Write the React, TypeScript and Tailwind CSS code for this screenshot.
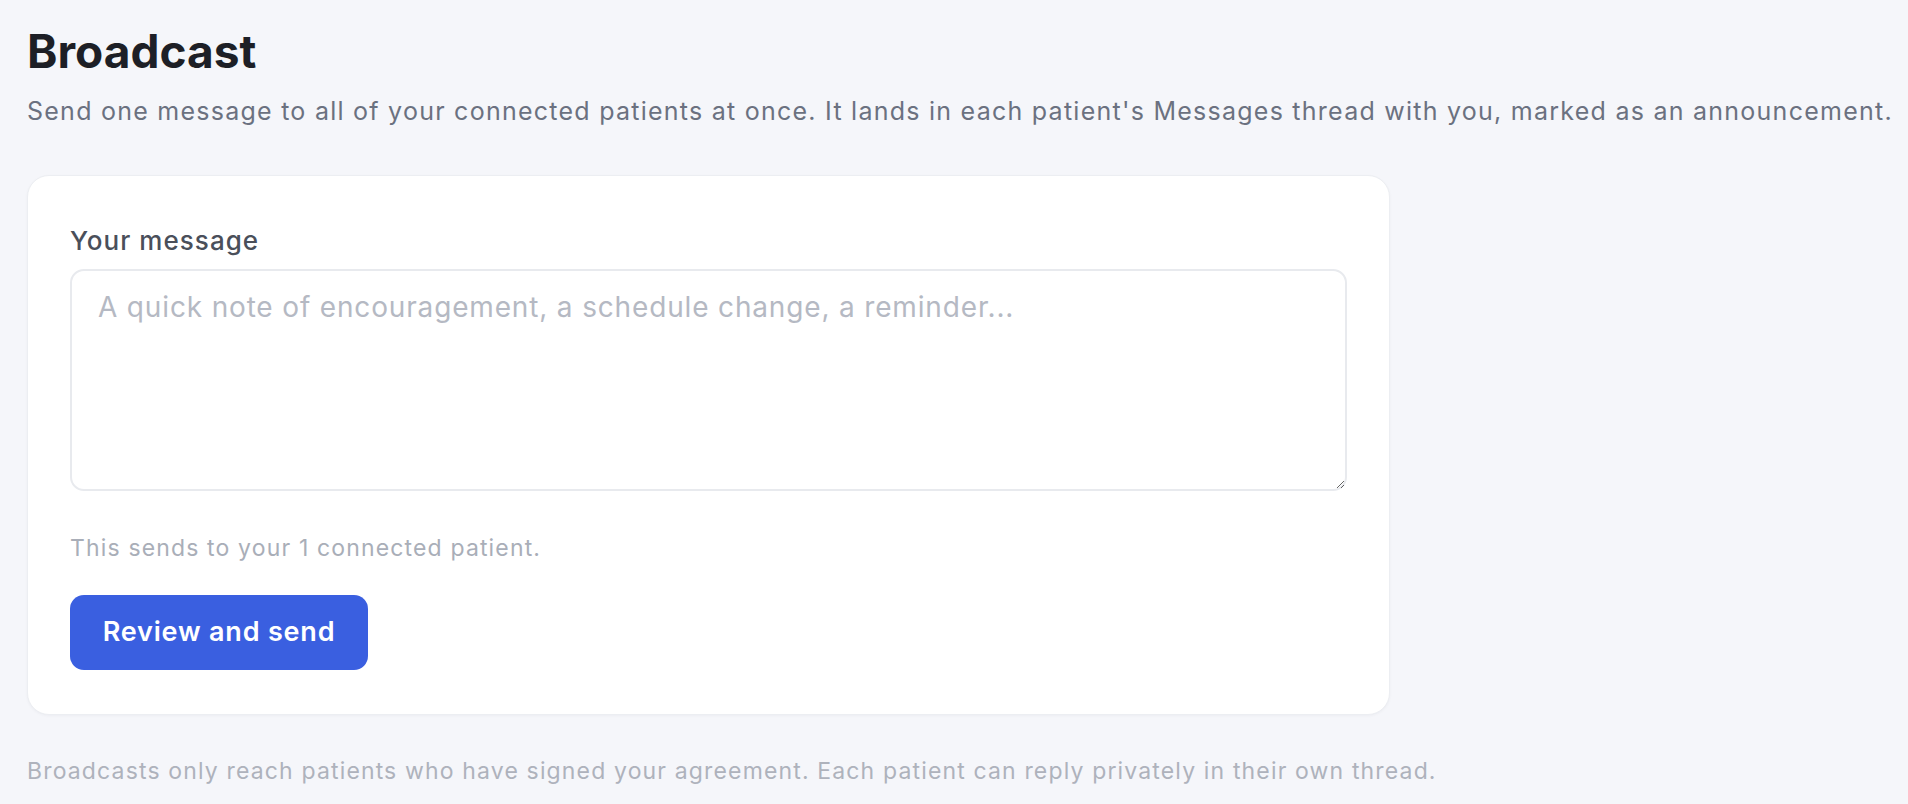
import React, { useState } from "react";

const Broadcast = () => {
  const [message, setMessage] = useState("");
  const connectedCount = 1;

  return (
    <div
      className="min-h-screen w-full bg-[#f5f6fa] pl-[27px] pt-[24px]"
      style={{ fontFamily: "Inter, 'Noto Sans', sans-serif" }}
    >
      <h1 className="text-[46px] leading-[54px] font-bold text-[#1d1f26]">Broadcast</h1>
      <p className="mt-[17px] whitespace-nowrap text-[25px] leading-[32px] tracking-[0.05em] text-[#6b7180]">
        Send one message to all of your connected patients at once. It lands in each patient's Messages thread with
        you, marked as an announcement.
      </p>

      {/* Composer card */}
      <div className="mt-[48px] w-[1363px] rounded-[22px] border border-[#eceef2] bg-white px-[42px] pt-[49px] pb-[44px] shadow-[0_1px_3px_rgba(16,24,40,0.04)]">
        <label className="block text-[26px] leading-[32px] font-medium tracking-[0.04em] text-[#4a4f5a]">
          Your message
        </label>
        <textarea
          value={message}
          onChange={(e) => setMessage(e.target.value)}
          placeholder="A quick note of encouragement, a schedule change, a reminder..."
          className="mt-[12px] block h-[222px] w-full rounded-[14px] border-2 border-[#e8eaee] bg-white px-[26px] pt-[18px] text-[28px] leading-[36px] tracking-[0.03em] text-[#1d1f26] outline-none placeholder:text-[#b5b9c3]"
        />
        <p className="mt-[42px] text-[23px] leading-[30px] tracking-[0.05em] text-[#a9aeb8]">
          This sends to your {connectedCount} connected patient.
        </p>
        <button className="mt-[32px] flex h-[75px] w-[298px] items-center justify-center rounded-[14px] bg-[#3a5fe0] text-[27px] font-semibold tracking-[0.03em] text-white">
          Review and send
        </button>
      </div>

      <p className="mt-[41px] text-[23px] leading-[30px] tracking-[0.05em] text-[#aeb2bc]">
        Broadcasts only reach patients who have signed your agreement. Each patient can reply privately in their own
        thread.
      </p>
    </div>
  );
};

export default function App() {
  return <Broadcast />;
}
